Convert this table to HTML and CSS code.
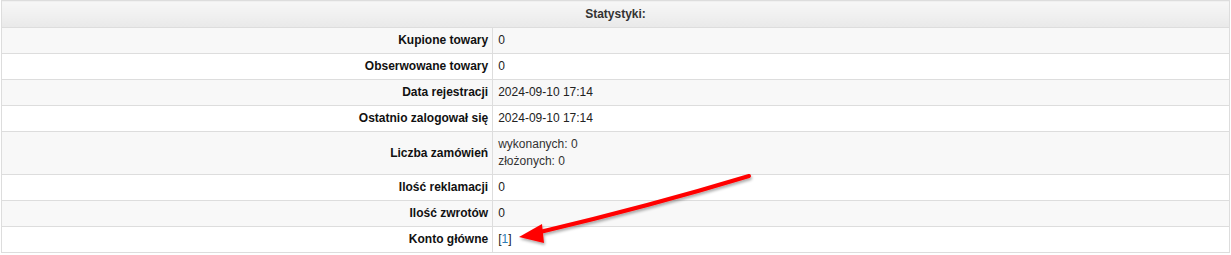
FILE: index.html
```html
<!DOCTYPE html>
<html lang="pl">
<head>
<meta charset="utf-8">
<link rel="stylesheet" href="styles.css">
</head>
<body>
<div class="page">
  <table class="stats">
    <thead>
      <tr><th colspan="2" class="head">Statystyki:</th></tr>
    </thead>
    <tbody>
      <tr><td class="label">Kupione towary</td><td class="value">0</td></tr>
      <tr><td class="label">Obserwowane towary</td><td class="value">0</td></tr>
      <tr><td class="label">Data rejestracji</td><td class="value">2024-09-10 17:14</td></tr>
      <tr><td class="label">Ostatnio zalogował się</td><td class="value">2024-09-10 17:14</td></tr>
      <tr><td class="label">Liczba zamówień</td><td class="value small"><div>wykonanych: 0</div><div>złożonych: 0</div></td></tr>
      <tr><td class="label">Ilość reklamacji</td><td class="value">0</td></tr>
      <tr><td class="label">Ilość zwrotów</td><td class="value">0</td></tr>
      <tr><td class="label">Konto główne</td><td class="value">[<a class="link" href="#">1</a>]</td></tr>
    </tbody>
  </table>
  <svg class="arrow" width="1231" height="255" viewBox="0 0 1231 255">
    <defs>
      <filter id="sh" x="-10%" y="-30%" width="120%" height="160%">
        <feGaussianBlur in="SourceAlpha" stdDeviation="1.5"/>
        <feOffset dx="1" dy="2"/>
        <feComponentTransfer><feFuncA type="linear" slope="0.35"/></feComponentTransfer>
        <feMerge><feMergeNode/><feMergeNode in="SourceGraphic"/></feMerge>
      </filter>
    </defs>
    <g filter="url(#sh)">
      <path d="M749 176 Q650 206 540 232" fill="none" stroke="#f00" stroke-width="4" stroke-linecap="round"/>
      <path d="M519 237 L542 224 L544 243 Z" fill="#f00"/>
    </g>
  </svg>
</div>
</body>
</html>
```
FILE: styles.css
```css
html, body {
  margin: 0;
  padding: 0;
  background: #fff;
}
.page {
  position: relative;
  width: 1231px;
  height: 255px;
}
.stats {
  margin-left: 1px;
  width: 1229px;
  border-collapse: collapse;
  font-family: "Liberation Sans", Arial, sans-serif;
  font-size: 12px;
  color: #222;
}
.stats th, .stats td {
  border: 1px solid #ddd;
}
.head {
  height: 27px;
  padding: 0;
  box-sizing: border-box;
  background: linear-gradient(#f7f7f7, #e9e9e9);
  color: #333;
  font-weight: bold;
  text-align: center;
  line-height: 18px;
}
.stats tbody tr:nth-child(odd) td {
  background: #f8f8f8;
}
.stats tbody tr:nth-child(even) td {
  background: #fff;
}
.label {
  width: 40%;
  text-align: right;
  font-weight: bold;
  padding: 4px 4px 4px 5px;
  line-height: 17px;
  color: #111;
}
.value {
  text-align: left;
  padding: 4px 5px;
  line-height: 17px;
  color: #222;
}
.small {
  font-size: 12px;
  line-height: 17px;
  color: #333;
}
.link {
  color: #2d7bb5;
  text-decoration: none;
}
.arrow {
  position: absolute;
  left: 0;
  top: 0;
  pointer-events: none;
}
```
